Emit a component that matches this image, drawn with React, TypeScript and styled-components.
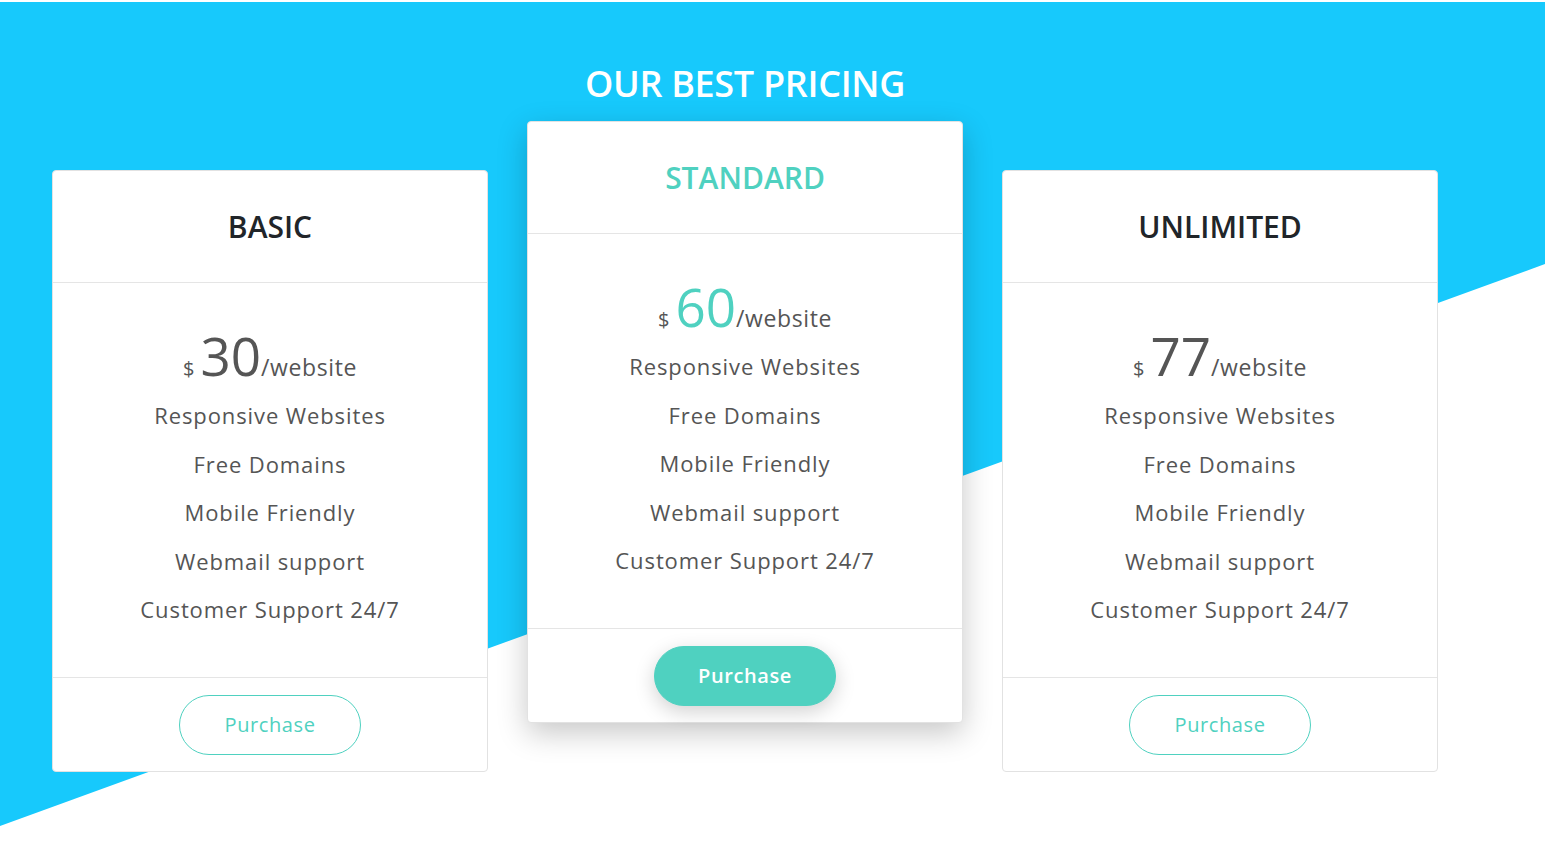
import React from "react";
import styled, { createGlobalStyle } from "styled-components";

const Global = createGlobalStyle`
  html, body { margin: 0; padding: 0; background: #ffffff; }
  body { font-family: "Open Sans", "Liberation Sans", sans-serif; }
  * { box-sizing: border-box; }
`;

const Section = styled.section`
  position: relative;
  height: 846px;
  overflow: hidden;
  &::before {
    content: "";
    position: absolute;
    left: 0;
    right: 0;
    top: 2px;
    bottom: 0;
    background: #17c9fc;
    clip-path: polygon(0 0, 100% 0, 100% 262px, 0 824px);
    z-index: 0;
  }
`;

const Container = styled.div`
  position: relative;
  z-index: 1;
  width: 1386px;
  margin-left: 52px;
  padding-top: 61px;
  display: flex;
  flex-direction: column;
  align-items: center;
`;

const Title = styled.h2`
  margin: 0;
  font-family: "Open Sans", sans-serif;
  font-weight: 600;
  font-size: 36px;
  line-height: 45px;
  color: #ffffff;
  letter-spacing: -0.3px;
`;

const Row = styled.div`
  margin-top: 15px;
  width: 100%;
  display: flex;
  gap: 39px;
  align-items: flex-start;
`;

const Card = styled.div<{ $featured?: boolean }>`
  width: 436px;
  margin-top: ${(p) => (p.$featured ? "0" : "49px")};
  background: #ffffff;
  border: 1px solid #e2e2e2;
  border-radius: 4px;
  display: flex;
  flex-direction: column;
  box-shadow: ${(p) => (p.$featured ? "0 10px 30px rgba(0, 0, 0, 0.22)" : "none")};
`;

const Header = styled.div`
  height: 112px;
  border-bottom: 1px solid #e5e5e5;
  display: flex;
  align-items: center;
  justify-content: center;
`;

const PlanName = styled.h3<{ $featured?: boolean }>`
  margin: 0;
  font-family: "Open Sans", sans-serif;
  font-weight: 600;
  font-size: 30px;
  letter-spacing: 0;
  color: ${(p) => (p.$featured ? "#4fd1c0" : "#212529")};
`;

const Body = styled.div`
  height: 395px;
  border-bottom: 1px solid #e5e5e5;
  padding-top: 44px;
  display: flex;
  flex-direction: column;
  align-items: center;
`;

const Price = styled.div`
  display: flex;
  align-items: baseline;
  color: #555555;
  height: 64px;
`;

const Currency = styled.span`
  font-size: 20px;
  margin-right: 6px;
`;

const Amount = styled.span<{ $featured?: boolean }>`
  font-size: 53px;
  font-weight: 400;
  line-height: 58px;
  color: ${(p) => (p.$featured ? "#4fd1c0" : "#555555")};
`;

const Per = styled.span`
  font-size: 23px;
  letter-spacing: 0.6px;
`;

const Features = styled.ul`
  list-style: none;
  margin: 0;
  padding: 0;
  display: flex;
  flex-direction: column;
  align-items: center;
`;

const Feature = styled.li`
  font-size: 22px;
  letter-spacing: 0.9px;
  line-height: 48.6px;
  color: #555555;
`;

const Footer = styled.div`
  height: 93px;
  display: flex;
  align-items: center;
  justify-content: center;
`;

const Button = styled.button<{ $featured?: boolean }>`
  width: 182px;
  height: 60px;
  border-radius: 30px;
  font-family: "Open Sans", sans-serif;
  font-size: 20px;
  letter-spacing: 0.6px;
  cursor: pointer;
  border: 1px solid #4fd1c0;
  background: ${(p) => (p.$featured ? "#4fd1c0" : "#ffffff")};
  color: ${(p) => (p.$featured ? "#ffffff" : "#4fd1c0")};
  font-weight: ${(p) => (p.$featured ? 600 : 400)};
  box-shadow: ${(p) => (p.$featured ? "0 6px 20px rgba(0,0,0,0.18)" : "none")};
`;

const plans = [
  { name: "BASIC", price: "30", featured: false },
  { name: "STANDARD", price: "60", featured: true },
  { name: "UNLIMITED", price: "77", featured: false },
];

const features = [
  "Responsive Websites",
  "Free Domains",
  "Mobile Friendly",
  "Webmail support",
  "Customer Support 24/7",
];

export default function App() {
  return (
    <>
      <Global />
      <Section>
        <Container>
          <Title>OUR BEST PRICING</Title>
          <Row>
            {plans.map((p) => (
              <Card key={p.name} $featured={p.featured}>
                <Header>
                  <PlanName $featured={p.featured}>{p.name}</PlanName>
                </Header>
                <Body>
                  <Price>
                    <Currency>$</Currency>
                    <Amount $featured={p.featured}>{p.price}</Amount>
                    <Per>/website</Per>
                  </Price>
                  <Features>
                    {features.map((f) => (
                      <Feature key={f}>{f}</Feature>
                    ))}
                  </Features>
                </Body>
                <Footer>
                  <Button $featured={p.featured}>Purchase</Button>
                </Footer>
              </Card>
            ))}
          </Row>
        </Container>
      </Section>
    </>
  );
}
